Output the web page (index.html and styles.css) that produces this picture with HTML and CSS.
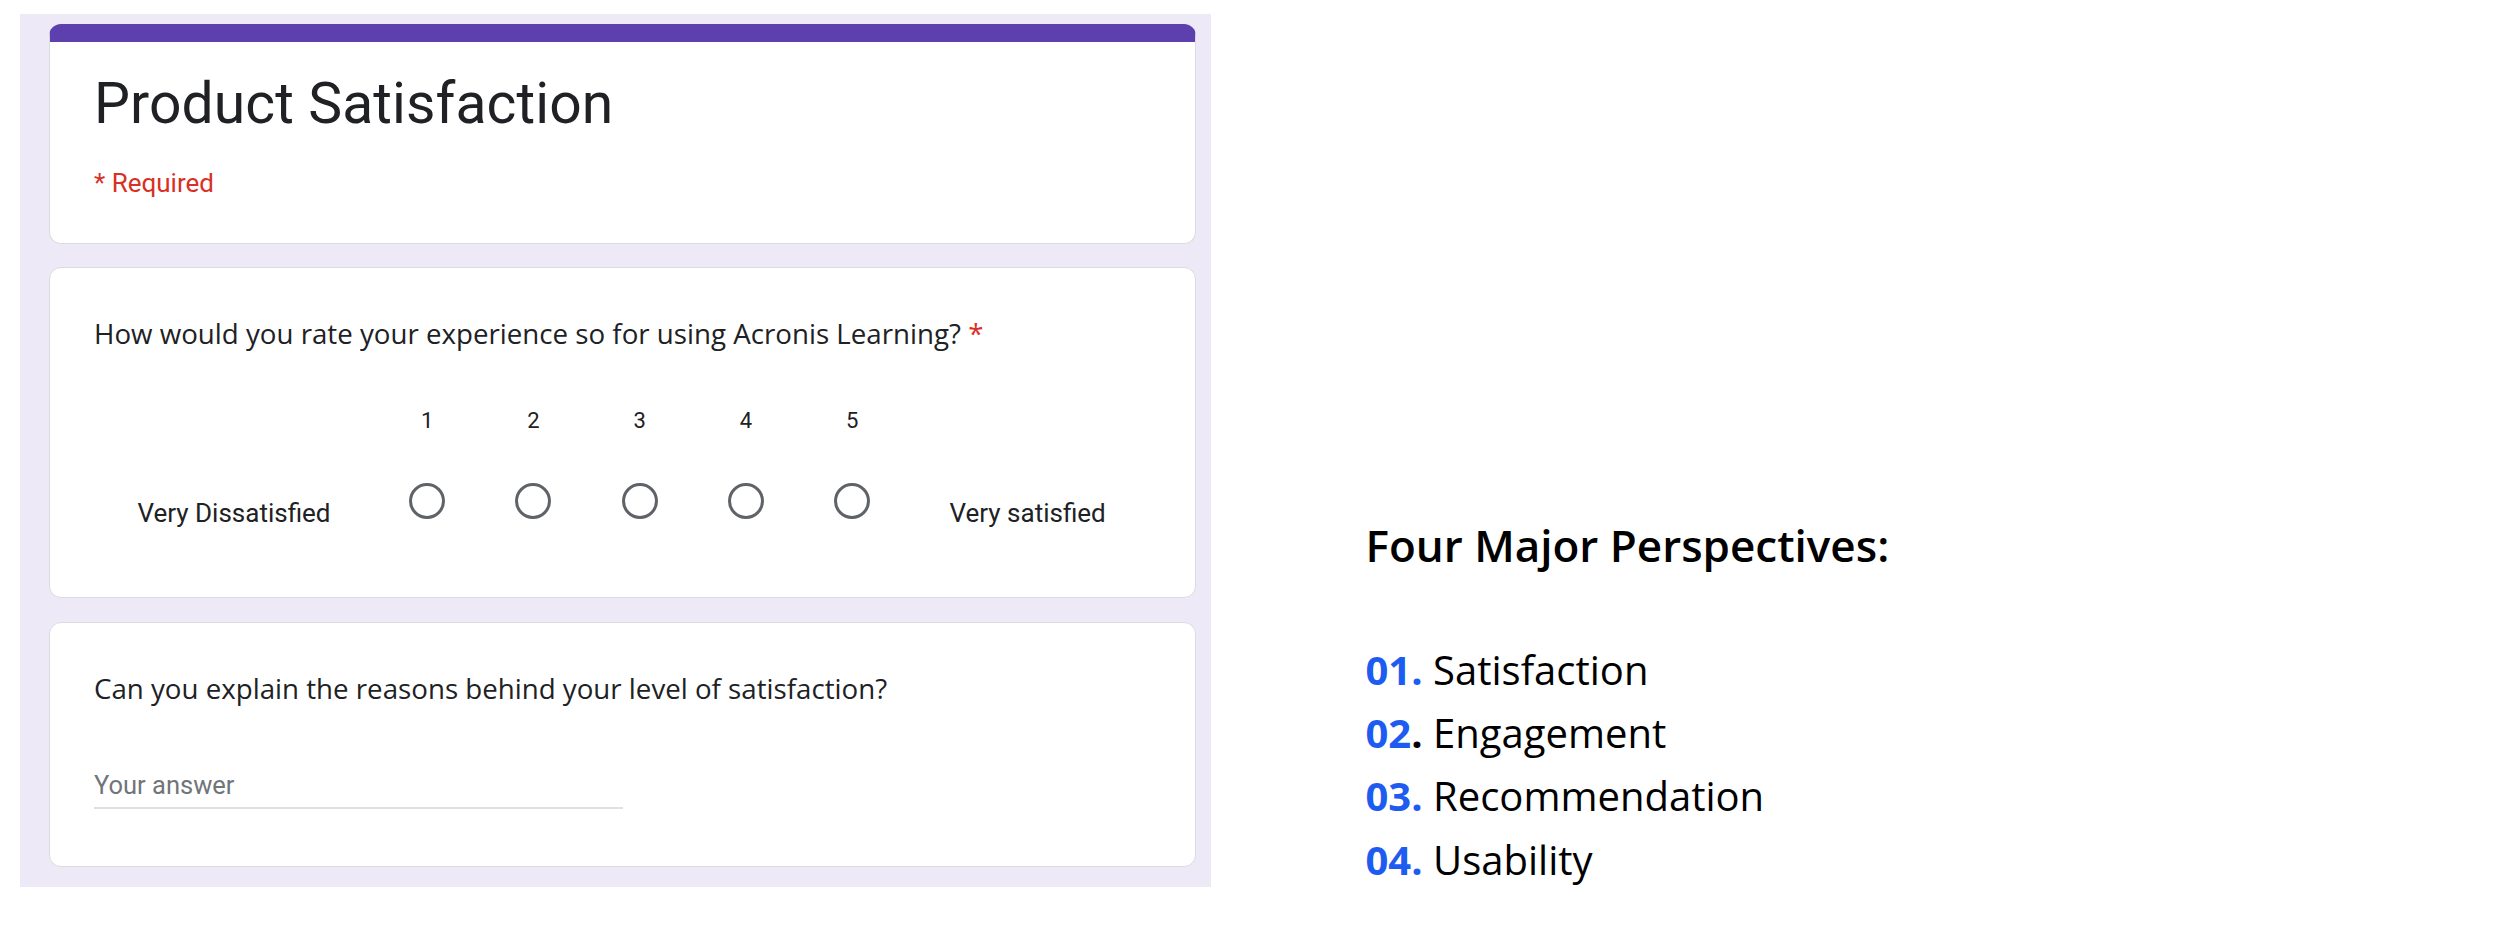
FILE: index.html
```html
<!DOCTYPE html>
<html lang="en">
<head>
<meta charset="utf-8">
<title>Product Satisfaction</title>
<link rel="stylesheet" href="styles.css">
</head>
<body>
<div class="page">
  <section class="form-panel">
    <div class="card card-header">
      <h1 class="form-title">Product Satisfaction</h1>
      <div class="required-note">* Required</div>
    </div>

    <div class="card card-scale">
      <div class="question">How would you rate your experience so for using Acronis Learning? <span class="asterisk">*</span></div>
      <div class="scale">
        <div class="scale-cell"></div>
        <div class="scale-num">1</div>
        <div class="scale-num">2</div>
        <div class="scale-num">3</div>
        <div class="scale-num">4</div>
        <div class="scale-num">5</div>
        <div class="scale-cell"></div>

        <div class="scale-label">Very Dissatisfied</div>
        <div class="scale-radio"><span class="radio"></span></div>
        <div class="scale-radio"><span class="radio"></span></div>
        <div class="scale-radio"><span class="radio"></span></div>
        <div class="scale-radio"><span class="radio"></span></div>
        <div class="scale-radio"><span class="radio"></span></div>
        <div class="scale-label">Very satisfied</div>
      </div>
    </div>

    <div class="card card-text">
      <div class="question">Can you explain the reasons behind your level of satisfaction?</div>
      <div class="answer">Your answer</div>
    </div>
  </section>

  <section class="info">
    <h2 class="info-title">Four Major Perspectives:</h2>
    <ul class="info-list">
      <li><span class="num">01.</span> Satisfaction</li>
      <li><span class="num">02</span><span class="dot">.</span> Engagement</li>
      <li><span class="num">03.</span> Recommendation</li>
      <li><span class="num">04.</span> Usability</li>
    </ul>
  </section>
</div>
</body>
</html>
```

FILE: styles.css
```css
* { box-sizing: border-box; }

html, body {
  margin: 0;
  padding: 0;
  background: #ffffff;
}

body {
  width: 2500px;
  height: 932px;
  overflow: hidden;
  font-family: Roboto, "Liberation Sans", sans-serif;
  color: #202124;
}

.page {
  display: flex;
  align-items: flex-start;
  padding-top: 14px;
  padding-left: 20px;
}

/* ---------- form panel ---------- */
.form-panel {
  width: 1191px;
  background: #ede9f6;
  padding: 10px 15px 20px 29px;
  display: flex;
  flex-direction: column;
}

.card {
  background: #ffffff;
  border: 1px solid #dadce0;
  border-radius: 12px;
  padding-left: 44px;
  padding-right: 45px;
}

.card-header {
  border-top: 18px solid #5d3fad;
  padding-top: 28px;
  padding-bottom: 44px;
}

.form-title {
  margin: 0;
  font-family: Roboto, "Liberation Sans", sans-serif;
  font-weight: 400;
  font-size: 57px;
  line-height: 68px;
  color: #202124;
  letter-spacing: 0.1px;
}

.required-note {
  margin-top: 29px;
  font-size: 26px;
  line-height: 32px;
  color: #d93025;
}

.card-scale {
  margin-top: 23px;
  padding-top: 47px;
  padding-bottom: 70px;
}

.card-text {
  margin-top: 24px;
  padding-top: 47px;
  padding-bottom: 57px;
}

.question {
  font-family: "Open Sans", Roboto, "Liberation Sans", sans-serif;
  font-size: 27.7px;
  line-height: 36px;
  color: #202124;
}

.asterisk {
  color: #d93025;
}

.scale {
  margin-top: 56px;
  display: grid;
  grid-template-columns: 280px repeat(5, 106.25px) 1fr;
  grid-template-rows: 28px 44px;
  row-gap: 48px;
}

.scale-num {
  text-align: center;
  font-size: 22px;
  line-height: 28px;
  color: #202124;
}

.scale-radio {
  display: flex;
  justify-content: center;
  align-items: flex-start;
}

.radio {
  width: 36px;
  height: 36px;
  border: 3px solid #5f6368;
  border-radius: 50%;
  display: block;
}

.scale-label {
  text-align: center;
  font-size: 26px;
  line-height: 30px;
  padding-top: 14.5px;
  color: #202124;
}

.answer {
  margin-top: 63.5px;
  width: 529px;
  font-size: 25.5px;
  line-height: 30px;
  color: #70757a;
  padding-bottom: 7.5px;
  border-bottom: 2px solid #e0e0e0;
}

/* ---------- right info ---------- */
.info {
  margin-left: 154.5px;
  padding-top: 506px;
  font-family: "Open Sans", "Liberation Sans", sans-serif;
  color: #000000;
}

.info-title {
  margin: 0;
  font-size: 44px;
  font-weight: 600;
  line-height: 50px;
  color: #000000;
}

.info-list {
  list-style: none;
  margin: 68px 0 0 0;
  padding: 0;
  font-size: 40px;
  line-height: 63.2px;
  font-weight: 400;
}

.num {
  color: #1d5bf1;
  font-weight: 700;
}

.dot {
  color: #000000;
  font-weight: 700;
}
```
